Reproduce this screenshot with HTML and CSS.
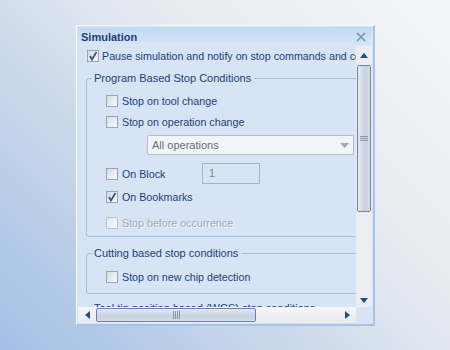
FILE: index.html
```html
<!DOCTYPE html>
<html lang="en">
<head>
  <meta charset="UTF-8">
  <title>Simulation</title>
  <link rel="stylesheet" href="styles.css">
</head>
<body>

<div class="window">
  <!-- Title bar -->
  <div class="titlebar">
    <span class="title">Simulation</span>
    <svg class="close" width="10" height="10" viewBox="0 0 10 10"><path d="M1 1 L9 9 M9 1 L1 9" stroke="#7592c0" stroke-width="1.6"/></svg>
  </div>

  <div class="frame">
    <div class="viewport">
      <div class="content">
        <div class="row row-top">
          <span class="box checked"><svg width="10" height="10" viewBox="0 0 10 10"><path d="M2 5 L4 8.5 L8.5 1" fill="none" stroke="#2d4f8e" stroke-width="1.7"/></svg></span>
          <span class="label">Pause simulation and notify on stop commands and conditions</span>
        </div>

        <!-- Program based -->
        <fieldset class="group group-program">
          <legend>Program Based Stop Conditions</legend>
          <div class="row"><span class="box"></span><span class="label">Stop on tool change</span></div>
          <div class="row"><span class="box"></span><span class="label">Stop on operation change</span></div>
          <div class="select">
            <span>All operations</span>
            <svg width="9" height="5" viewBox="0 0 9 5"><path d="M0 0 L9 0 L4.5 5 Z" fill="#a4a8ad"/></svg>
          </div>
          <div class="row row-block"><span class="box"></span><span class="label label-block">On Block</span><span class="textbox">1</span></div>
          <div class="row row-bookmarks"><span class="box checked"><svg width="10" height="10" viewBox="0 0 10 10"><path d="M2 5 L4 8.5 L8.5 1" fill="none" stroke="#2d4f8e" stroke-width="1.7"/></svg></span><span class="label">On Bookmarks</span></div>
          <div class="row row-disabled"><span class="box disabled"></span><span class="label">Stop before occurrence</span></div>
        </fieldset>

        <!-- Cutting based -->
        <fieldset class="group group-cutting">
          <legend>Cutting based stop conditions</legend>
          <div class="row"><span class="box"></span><span class="label">Stop on new chip detection</span></div>
        </fieldset>

        <fieldset class="group group-tool">
          <legend>Tool tip position based (WCS) stop conditions</legend>
        </fieldset>
      </div>
    </div>

    <!-- Vertical scrollbar -->
    <div class="vscroll">
      <svg class="arrow" width="8" height="5" viewBox="0 0 8 5"><path d="M0 5 L8 5 L4 0 Z" fill="#1f4a94"/></svg>
      <div class="vthumb">
        <svg width="8" height="6" viewBox="0 0 8 6"><path d="M0 0.5 H8 M0 2.5 H8 M0 4.5 H8" stroke="#8a96aa" stroke-width="1"/></svg>
      </div>
      <div class="vtrack"></div>
      <svg class="arrow" width="8" height="5" viewBox="0 0 8 5"><path d="M0 0 L8 0 L4 5 Z" fill="#1f4a94"/></svg>
    </div>

    <!-- Horizontal scrollbar -->
    <div class="hscroll">
      <svg class="arrow" width="5" height="8" viewBox="0 0 5 8"><path d="M5 0 L5 8 L0 4 Z" fill="#1f4a94"/></svg>
      <div class="hthumb">
        <svg width="7" height="8" viewBox="0 0 7 8"><path d="M0.5 0 V8 M2.5 0 V8 M4.5 0 V8 M6.5 0 V8" stroke="#8a96aa" stroke-width="1"/></svg>
      </div>
      <div class="htrack"></div>
      <svg class="arrow" width="5" height="8" viewBox="0 0 5 8"><path d="M0 0 L0 8 L5 4 Z" fill="#1f4a94"/></svg>
    </div>
    <div class="corner"></div>
  </div>
</div>

</body>
</html>
```

FILE: styles.css
```css
html, body {
  height: 100%;
}

body {
  margin: 0;
  padding: 25px 0 0 76px;
  box-sizing: border-box;
  font-family: "Liberation Sans", Arial, sans-serif;
  font-size: 10.7px;
  color: #1e3f7a;
  background: linear-gradient(45deg, #a3bfe6 0%, #c9d7ea 35%, #e6ebf2 62%, #f4f5f7 100%);
}

.window {
  width: 299px;
  height: 301px;
  box-sizing: border-box;
  border-left: 1px solid #f4f7fb;
  border-top: 1px solid #f4f7fb;
  border-right: 2px solid #a9c3e5;
  border-bottom: 2px solid #a9c3e5;
  padding: 1px;
  background: #d6e4f5;
  display: flex;
  flex-direction: column;
}

.titlebar {
  height: 19px;
  flex: none;
  display: flex;
  align-items: center;
  justify-content: space-between;
  padding: 0 6px 0 3px;
  background: linear-gradient(#c3d8f2, #d8e6f7);
}

.title {
  font-weight: bold;
  font-size: 11px;
  color: #1c3f7e;
}

.frame {
  flex: 1;
  display: grid;
  grid-template-columns: 1fr 16px;
  grid-template-rows: 1fr 16px;
  min-height: 0;
}

.viewport {
  overflow: hidden;
  background: #d6e4f5;
}

.content {
  width: 330px;
  padding: 2px 0 0 8px;
}

.row {
  display: flex;
  align-items: center;
  height: 21px;
  white-space: nowrap;
}

.row-top {
  height: 16px;
  margin-left: 1px;
}

.row-top .label {
  margin-left: 3px;
}

.box {
  width: 12px;
  height: 12px;
  box-sizing: border-box;
  border: 1px solid #98a3b4;
  background: linear-gradient(135deg, #d6dbe2, #fafbfc);
  display: flex;
  align-items: center;
  justify-content: center;
  flex: none;
}

.box.disabled {
  border-color: #bcc3cc;
  background: linear-gradient(135deg, #e3e7ec, #f7f8fa);
}

.label {
  margin-left: 4px;
}

.group {
  margin: 7px 0 0 0;
  border: 1px solid #a4bedf;
  border-radius: 3px;
  padding: 5px 0 0 19px;
  min-width: 0;
}

.group legend {
  margin-left: -14px;
  padding: 0 3px 0 2px;
  line-height: 14px;
  font-size: 11px;
  white-space: nowrap;
}

.group-program {
  padding-bottom: 3px;
}

.row-block {
  margin-top: 8px;
}

.label-block {
  width: 80px;
}

.textbox {
  width: 58px;
  height: 21px;
  box-sizing: border-box;
  border: 1px solid #a9b2bc;
  padding-left: 6px;
  line-height: 19px;
  color: #7d848c;
}

.row-bookmarks {
  margin-top: 2px;
}

.row-disabled {
  margin-top: 5px;
  color: #a5a8ad;
  text-shadow: 1px 1px 0 #f2f6fb;
}

.select {
  margin: 3px 0 0 41px;
  width: 207px;
  height: 20px;
  box-sizing: border-box;
  border: 1px solid #b5bdc8;
  border-radius: 2px;
  background: #f3f4f6;
  color: #6a6e75;
  font-size: 11px;
  display: flex;
  align-items: center;
  justify-content: space-between;
  padding: 0 4px 0 4px;
}

.group-cutting {
  margin-top: 9px;
  padding: 6px 0 6px 19px;
}

.group-tool {
  margin-top: 7px;
  height: 30px;
  padding-top: 0;
}

/* scrollbars */
.vscroll {
  background: #eceef1;
  display: flex;
  flex-direction: column;
  align-items: center;
  padding: 7px 0 4px;
}

.vscroll .arrow {
  flex: none;
}

.vthumb {
  margin-top: 7px;
  width: 14px;
  height: 147px;
  box-sizing: border-box;
  border: 1px solid #7181a6;
  border-radius: 2px;
  background: linear-gradient(90deg, #e4e9f0, #c8d1de 60%, #d6dde7);
  display: flex;
  align-items: center;
  justify-content: center;
  flex: none;
}

.vtrack {
  flex: 1;
}

.hscroll {
  background: linear-gradient(#f6f6f7, #e9ebee);
  display: flex;
  align-items: center;
  padding: 0 6px 0 7px;
}

.hscroll .arrow {
  flex: none;
}

.hthumb {
  margin-left: 6px;
  width: 160px;
  height: 14px;
  box-sizing: border-box;
  border: 1px solid #7181a6;
  border-radius: 2px;
  background: linear-gradient(#e4e9f0, #c8d1de 60%, #d6dde7);
  display: flex;
  align-items: center;
  justify-content: center;
  flex: none;
}

.htrack {
  flex: 1;
}

.corner {
  background: #d6e4f5;
}
```
